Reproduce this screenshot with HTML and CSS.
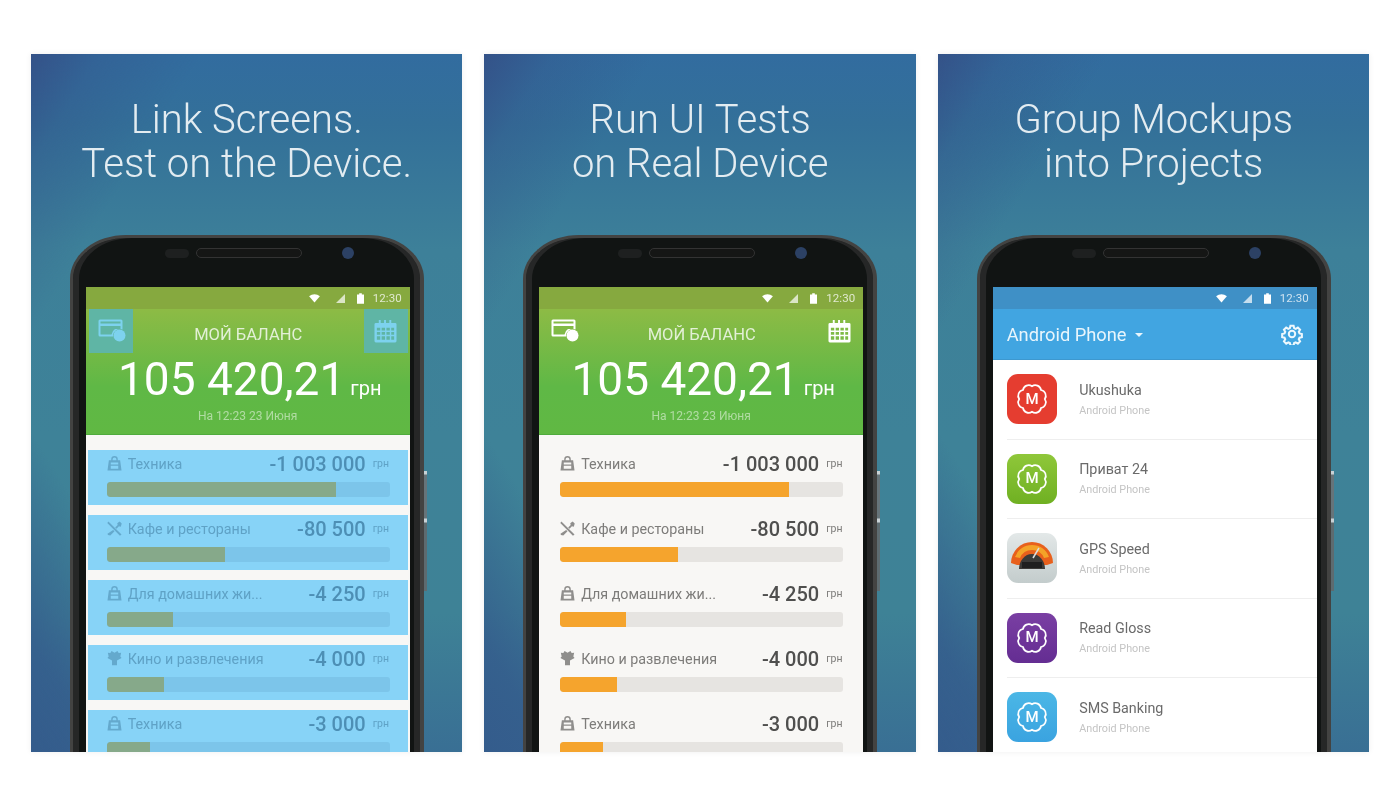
FILE: index.html
```html
<!DOCTYPE html>
<html lang="en">
<head>
<meta charset="utf-8">
<title>Mockups</title>
<link rel="stylesheet" href="styles.css">
</head>
<body>
<svg class="defs" width="0" height="0" aria-hidden="true">
  <symbol id="wifi" viewBox="0 0 12 10"><path d="M0 2.500C3.500-.5 8.500-.5 12 2.500L6 9.500z"/></symbol>
  <symbol id="signal" viewBox="0 0 10 10"><path d="M10 0V10H0z"/></symbol>
  <symbol id="batt" viewBox="0 0 8 12"><path d="M2.500 0h3v1.500H8V12H0V1.500h2.500z"/></symbol>
  <symbol id="card" viewBox="0 0 30 24"><path d="M2 1.500h21a1.500 1.500 0 0 1 1.500 1.500v8.500A7 7 0 0 0 15 18.500H2A1.500 1.500 0 0 1 .5 17V3A1.500 1.500 0 0 1 2 1.500zM2.500 3.500v2h20v-2zM2.500 8v8.500h11A8 8 0 0 1 17 11H22.500V8z" fill-rule="evenodd"/><circle cx="21.500" cy="17.500" r="6"/></symbol>
  <symbol id="cal" viewBox="0 0 24 24"><path d="M5 0h2v3h3.500V0h2v3H16V0h2v3h4a1.500 1.500 0 0 1 1.500 1.500V22a1.500 1.500 0 0 1-1.500 1.500H2A1.500 1.500 0 0 1 .5 22V4.500A1.500 1.500 0 0 1 2 3h3zM3 8v3h3.500V8zm5 0v3h3.500V8zm5 0v3h3.500V8zm5 0v3h3V8zM3 12.500v3h3.500v-3zm5 0v3h3.500v-3zm5 0v3h3.500v-3zm5 0v3h3v-3zM3 17v3.500h3.500V17zm5 0v3.500h3.500V17zm5 0v3.500h3.500V17zm5 0v3.500h3V17z" fill-rule="evenodd"/></symbol>
  <symbol id="bag" viewBox="0 0 16 16"><path d="M4.500 4.500V3.500a3.500 3.500 0 0 1 7 0V4.500h2.500l1.500 11H.5L2 4.500zm1.500 0h4V3.500a2 2 0 0 0-4 0zM4 7v2h8V7zM4 10.500V13.500h8V10.500z" fill-rule="evenodd"/></symbol>
  <symbol id="fork" viewBox="0 0 16 16"><path d="M1.500 .5l14 14-1.700 1.300L.3 2zM13.500 .5l2.200 2.200-1 3.300-2-.5-2.500 2.800-1.500-1.500 2.700-2.500-.5-2zM6.500 9.500l1.500 1.500-4.500 4.500L1 15l-.5-1.500z"/></symbol>
  <symbol id="heart" viewBox="0 0 18 18"><path d="M1 2l3 .5L5.500 0 9 2 12.500 0 14 2.500l3-.5-1 4.500 1.500 2-5.500 3v5.500H6V11.500L.5 8.500 2 6.500z"/></symbol>
  <symbol id="gear" viewBox="0 0 24 24"><path d="M10 1.500h4l.7 3 2 .9 2.700-1.600 2.800 2.800-1.600 2.700.9 2 3 .7v4l-3 .7-.9 2 1.600 2.700-2.800 2.800-2.700-1.600-2 .9-.7 3h-4l-.7-3-2-.9-2.700 1.600-2.800-2.800 1.600-2.700-.9-2-3-.7v-4l3-.7.9-2-1.600-2.700 2.800-2.800 2.700 1.600 2-.9z" transform="translate(1.700 1.700) scale(.86)" fill="none" stroke="currentColor" stroke-width="2.600"/><circle cx="12" cy="12" r="3.500" fill="none" stroke="currentColor" stroke-width="2.200"/></symbol>
  <symbol id="blob" viewBox="-25 -25 50 50"><path d="M12.800 0A5.800 5.800 0 0 1 9 9 5.800 5.800 0 0 1 0 12.800 5.800 5.800 0 0 1-9 9 5.800 5.800 0 0 1-12.800 0 5.800 5.800 0 0 1-9-9 5.800 5.800 0 0 1 0-12.800 5.800 5.800 0 0 1 9-9 5.800 5.800 0 0 1 12.800 0z" fill="none" stroke="#fff" stroke-width="1.700"/></symbol>
  <symbol id="gauge" viewBox="0 0 50 50"><path d="M4 30a21 21 0 0 1 42 0l-6 2H10z" fill="#e8601c"/><path d="M8 24a18 18 0 0 1 34 0l-5 1a13 13 0 0 0-24 0z" fill="#f4a328"/><path d="M12 36a13 15 0 1 1 26 0z" fill="#3b3a38"/><path d="M26 25l6-10" stroke="#ddd" stroke-width="1.500"/><rect x="15" y="29" width="20" height="6" fill="#1f1f1f"/></symbol>
</svg>

<main class="gallery">

  <section class="card">
    <h1 class="headline">Link Screens.<br>Test on the Device.</h1>
    <div class="phone">
      <div class="side-keys"></div>
      <div class="earpiece"><i class="sensor"></i><i class="speaker"></i><i class="camera"></i></div>
      <div class="screen">
        <div class="status status-green">
          <svg class="st-wifi"><use href="#wifi"/></svg><svg class="st-signal"><use href="#signal"/></svg><svg class="st-batt"><use href="#batt"/></svg><span class="st-time">12:30</span>
        </div>
        <header class="balance">
          <div class="balance-top">
            <span class="tool tool-hi"><svg class="ic-card"><use href="#card"/></svg></span>
            <span class="balance-title">МОЙ БАЛАНС</span>
            <span class="tool tool-hi"><svg class="ic-cal"><use href="#cal"/></svg></span>
          </div>
          <div class="balance-sum">105 420,21<small>грн</small></div>
          <div class="balance-date">На 12:23 23 Июня</div>
        </header>
        <div class="spend">
          <div class="row row-hi"><div class="row-top"><svg class="row-ic"><use href="#bag"/></svg><span class="row-name">Техника</span><b class="row-sum">-1 003 000</b><small class="row-cur">грн</small></div><div class="track"><div class="fill" style="width:229px"></div></div></div>
          <div class="row row-hi"><div class="row-top"><svg class="row-ic"><use href="#fork"/></svg><span class="row-name">Кафе и рестораны</span><b class="row-sum">-80 500</b><small class="row-cur">грн</small></div><div class="track"><div class="fill" style="width:118px"></div></div></div>
          <div class="row row-hi"><div class="row-top"><svg class="row-ic"><use href="#bag"/></svg><span class="row-name">Для домашних жи...</span><b class="row-sum">-4 250</b><small class="row-cur">грн</small></div><div class="track"><div class="fill" style="width:66px"></div></div></div>
          <div class="row row-hi"><div class="row-top"><svg class="row-ic"><use href="#heart"/></svg><span class="row-name">Кино и развлечения</span><b class="row-sum">-4 000</b><small class="row-cur">грн</small></div><div class="track"><div class="fill" style="width:57px"></div></div></div>
          <div class="row row-hi"><div class="row-top"><svg class="row-ic"><use href="#bag"/></svg><span class="row-name">Техника</span><b class="row-sum">-3 000</b><small class="row-cur">грн</small></div><div class="track"><div class="fill" style="width:43px"></div></div></div>
        </div>
      </div>
    </div>
  </section>

  <section class="card">
    <h1 class="headline">Run UI Tests<br>on Real Device</h1>
    <div class="phone">
      <div class="side-keys"></div>
      <div class="earpiece"><i class="sensor"></i><i class="speaker"></i><i class="camera"></i></div>
      <div class="screen">
        <div class="status status-green">
          <svg class="st-wifi"><use href="#wifi"/></svg><svg class="st-signal"><use href="#signal"/></svg><svg class="st-batt"><use href="#batt"/></svg><span class="st-time">12:30</span>
        </div>
        <header class="balance">
          <div class="balance-top">
            <span class="tool"><svg class="ic-card"><use href="#card"/></svg></span>
            <span class="balance-title">МОЙ БАЛАНС</span>
            <span class="tool"><svg class="ic-cal"><use href="#cal"/></svg></span>
          </div>
          <div class="balance-sum">105 420,21<small>грн</small></div>
          <div class="balance-date">На 12:23 23 Июня</div>
        </header>
        <div class="spend">
          <div class="row"><div class="row-top"><svg class="row-ic"><use href="#bag"/></svg><span class="row-name">Техника</span><b class="row-sum">-1 003 000</b><small class="row-cur">грн</small></div><div class="track"><div class="fill" style="width:229px"></div></div></div>
          <div class="row"><div class="row-top"><svg class="row-ic"><use href="#fork"/></svg><span class="row-name">Кафе и рестораны</span><b class="row-sum">-80 500</b><small class="row-cur">грн</small></div><div class="track"><div class="fill" style="width:118px"></div></div></div>
          <div class="row"><div class="row-top"><svg class="row-ic"><use href="#bag"/></svg><span class="row-name">Для домашних жи...</span><b class="row-sum">-4 250</b><small class="row-cur">грн</small></div><div class="track"><div class="fill" style="width:66px"></div></div></div>
          <div class="row"><div class="row-top"><svg class="row-ic"><use href="#heart"/></svg><span class="row-name">Кино и развлечения</span><b class="row-sum">-4 000</b><small class="row-cur">грн</small></div><div class="track"><div class="fill" style="width:57px"></div></div></div>
          <div class="row"><div class="row-top"><svg class="row-ic"><use href="#bag"/></svg><span class="row-name">Техника</span><b class="row-sum">-3 000</b><small class="row-cur">грн</small></div><div class="track"><div class="fill" style="width:43px"></div></div></div>
        </div>
      </div>
    </div>
  </section>

  <section class="card">
    <h1 class="headline">Group Mockups<br>into Projects</h1>
    <div class="phone">
      <div class="side-keys"></div>
      <div class="earpiece"><i class="sensor"></i><i class="speaker"></i><i class="camera"></i></div>
      <div class="screen">
        <div class="status status-blue">
          <svg class="st-wifi"><use href="#wifi"/></svg><svg class="st-signal"><use href="#signal"/></svg><svg class="st-batt"><use href="#batt"/></svg><span class="st-time">12:30</span>
        </div>
        <header class="appbar">
          <span class="appbar-title">Android Phone</span><i class="caret"></i>
          <svg class="ic-gear"><use href="#gear"/></svg>
        </header>
        <ul class="projects">
          <li class="project"><span class="app app-red"><svg><use href="#blob"/></svg><span class="app-m">M</span></span><div class="app-text"><div class="app-name">Ukushuka</div><div class="app-sub">Android Phone</div></div></li>
          <li class="project"><span class="app app-green"><svg><use href="#blob"/></svg><span class="app-m">M</span></span><div class="app-text"><div class="app-name">Приват 24</div><div class="app-sub">Android Phone</div></div></li>
          <li class="project"><span class="app app-gray"><svg><use href="#gauge"/></svg></span><div class="app-text"><div class="app-name">GPS Speed</div><div class="app-sub">Android Phone</div></div></li>
          <li class="project"><span class="app app-purple"><svg><use href="#blob"/></svg><span class="app-m">M</span></span><div class="app-text"><div class="app-name">Read Gloss</div><div class="app-sub">Android Phone</div></div></li>
          <li class="project"><span class="app app-sky"><svg><use href="#blob"/></svg><span class="app-m">M</span></span><div class="app-text"><div class="app-name">SMS Banking</div><div class="app-sub">Android Phone</div></div></li>
        </ul>
      </div>
    </div>
  </section>

</main>
</body>
</html>
```
FILE: styles.css
```css
* { box-sizing: border-box; }
html, body { margin: 0; height: 100%; background: #fff; overflow: hidden; }
body { font-family: Roboto, "Liberation Sans", sans-serif; }
.defs { position: absolute; }

.gallery { display: flex; gap: 22.100px; padding: 54px 0 0 31px; }

.card {
  width: 431.400px; height: 698px; flex: none; overflow: hidden;
  display: flex; flex-direction: column; align-items: center;
  box-shadow: 0 0 6px rgba(0,0,0,.07);
  background:
    linear-gradient(to top right, #345c8c 0, rgba(52,92,140,.85) 8%, rgba(52,92,140,0) 23%),
    linear-gradient(to bottom right, #345288 0, rgba(52,82,136,.35) 8%, rgba(52,82,136,0) 20%),
    linear-gradient(180deg, #326c9f 0, #337099 10%, #3d8099 28%, #3e8298 55%, #3e8296 80%, #396f94 100%);
}

.headline {
  margin: 44px 0 0; color: #e3ecf1; font-weight: 300; font-size: 40px; line-height: 44px;
  text-align: center; height: 88px; white-space: nowrap; filter: blur(.6px);
}

.phone {
  position: relative; flex: none; width: 354px; height: 600px; margin-top: 49px; padding: 49px 10px 0 13px;
  border-radius: 56px 56px 0 0 / 44px 44px 0 0;
  background: #111413;
  border: solid #434342; border-width: 3px 4px 0 3px;
  box-shadow: inset 6px 0 0 #262727, inset -6px 0 0 #262727;
  filter: blur(.7px);
}
.side-keys {
  position: absolute; right: -7px; top: 233px; width: 3px; height: 120px;
  background: linear-gradient(#c9d2d6 0, #c9d2d6 3px, #66747a 4px, #66747a 47px, #c9d2d6 48px, #c9d2d6 51px, #5d6b70 52px);
}
.earpiece { position: absolute; left: 92px; top: 9px; display: flex; align-items: center; }
.sensor { width: 24px; height: 9px; border-radius: 5px; background: #1e2020; }
.speaker { width: 106px; height: 10px; margin-left: 7px; border-radius: 5px; border: 1px solid #333; background: #151615; }
.camera { width: 12px; height: 12px; margin-left: 40px; border-radius: 50%; background: #2c4164; }

.screen { width: 324px; height: 560px; display: flex; flex-direction: column; background: #fff; }

.status { flex: none; height: 22px; display: flex; align-items: center; justify-content: flex-end; padding-right: 6px; color: #fff; fill: #fff; }
.status-green { background: #86a93f; }
.status-blue { background: #3f90c6; }
.st-wifi { width: 11px; height: 9px; margin-right: 16px; }
.st-signal { width: 9px; height: 9px; margin-right: 12px; opacity: .7; }
.st-batt { width: 7px; height: 11px; margin-right: 9px; }
.st-time { font-size: 11.500px; width: 31px; color: rgba(255,255,255,.75); letter-spacing: .1px; }

.balance {
  flex: none; height: 126px; color: #fff; text-align: center;
  background: linear-gradient(#8dbb45, #5fb846 62%, #60b843);
  border-bottom: 1px solid #4fab3d;
}
.balance-top { display: flex; justify-content: space-between; align-items: center; padding: 0 2px 0 3px; height: 44px; }
.balance-title { font-size: 16.500px; color: rgba(255,255,255,.78); padding-top: 6px; }
.tool { width: 44px; height: 44px; display: flex; align-items: center; justify-content: center; fill: #fff; }
.tool-hi { background: #5fb5a5; fill: #7dd2ee; }
.ic-card { width: 30px; height: 24px; margin-bottom: 2px; margin-left: 4px; }
.ic-cal { width: 23px; height: 23px; }
.balance-sum { font-weight: 400; font-size: 46px; line-height: 50px; margin-top: 1px; padding-left: 4px; text-align: center; white-space: nowrap; }
.balance-sum small { font-size: 20px; font-weight: 400; margin-left: 5px; }
.balance-date { font-size: 12px; color: rgba(255,255,255,.5); margin-top: -4px; }

.spend { flex: 1; background: #f8f7f5; padding: 15px 2px 0; display: flex; flex-direction: column; gap: 10px; }
.row { flex: none; height: 55px; padding: 0 18px 0 19px; --name: #7d7c7a; --sum: #4f4f4e; --track: #e6e4e1; --fill: #f5a42d; }
.row-hi { background: #87d3f7; --name: #5fa2c6; --sum: #4d8fb5; --track: #7cc5ea; --fill: #86a98a; }
.row-top { height: 27px; margin-bottom: 5px; display: flex; align-items: center; color: var(--name); fill: var(--name); }
.row-ic { width: 15px; height: 15px; flex: none; margin-right: 6px; opacity: .85; }
.row-name { font-size: 14.300px; flex: 1; white-space: nowrap; }
.row-sum { font-size: 20px; font-weight: 500; color: var(--sum); white-space: nowrap; }
.row-cur { font-size: 10.500px; width: 24px; padding-left: 7px; flex: none; white-space: nowrap; }
.track { height: 15px; border-radius: 3px; background: var(--track); overflow: hidden; }
.fill { height: 100%; border-radius: 3px 0 0 3px; background: var(--fill); }

.appbar { flex: none; height: 51px; display: flex; align-items: center; padding: 0 14px 0 14px; background: #41a5e1; border-bottom: 1px solid #3d98cf; color: #e8f5fc; }
.appbar-title { font-size: 18.300px; }
.caret { width: 0; height: 0; margin: 2px 0 0 8px; border: 4px solid transparent; border-top-color: #e8f5fc; border-bottom: 0; }
.ic-gear { width: 22px; height: 22px; margin-left: auto; color: #eef8fd; }

.projects { list-style: none; margin: 0 0 0 14.500px; padding: 0; flex: 1; background: #fff; }
.project { height: 79.500px; display: flex; align-items: center; gap: 22px; border-bottom: 1px solid #eeeeee; }
.app { width: 50px; height: 50px; flex: none; border-radius: 11px; display: grid; place-items: center; }
.app svg { width: 50px; height: 50px; display: block; grid-area: 1 / 1; }
.app-m { grid-area: 1 / 1; color: #fff; font-size: 15px; font-weight: 500; line-height: 1; }
.app-red { background: #e53d30; }
.app-green { background: linear-gradient(#8fc73a, #6fb022); }
.app-gray { background: linear-gradient(#e3e8e8, #c3cccc); }
.app-purple { background: linear-gradient(#7a3fa3, #642d92); }
.app-sky { background: linear-gradient(#4bb7e6, #3aa3e0); }
.app-name { font-size: 14.300px; color: #6a6a6a; }
.app-sub { font-size: 10.800px; color: #c4c4c4; margin-top: 6px; }
```
